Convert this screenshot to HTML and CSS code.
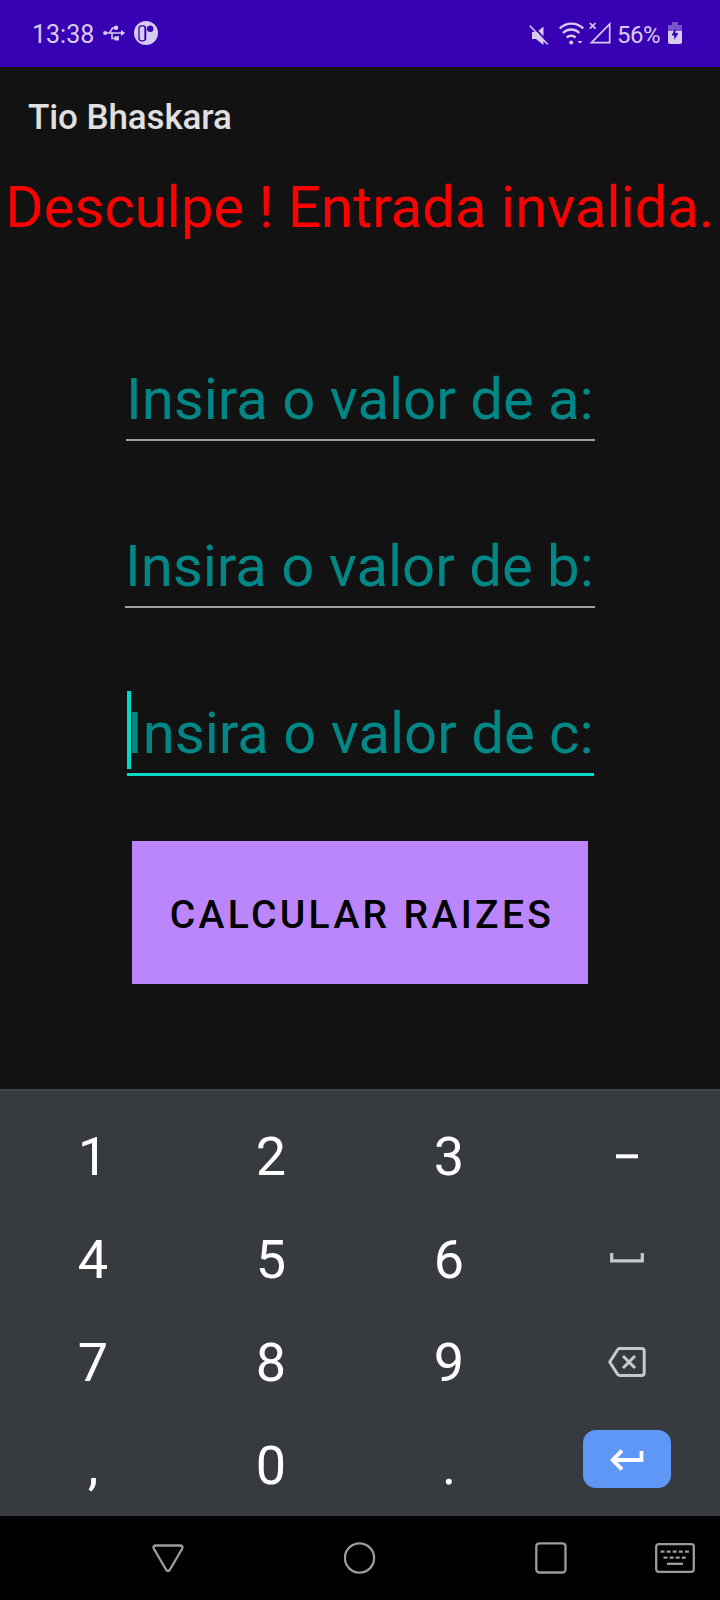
FILE: index.html
```html
<!DOCTYPE html>
<html lang="pt-BR">
<head>
<meta charset="utf-8">
<title>Tio Bhaskara</title>
<link rel="stylesheet" href="styles.css">
</head>
<body>
<div class="screen">
  <header class="status">
    <span class="clock">13:38</span>
    <svg class="usb" width="24" height="20" viewBox="0 0 24 20" fill="none" stroke="currentColor" stroke-width="1.600">
      <path d="M2 10H19M6.500 10L9.500 5H12M9 10V15.500H12"/>
      <circle cx="2.200" cy="10" r="2.100" fill="currentColor" stroke="none"/>
      <circle cx="13" cy="4.800" r="2.300" fill="currentColor" stroke="none"/>
      <path d="M11.500 13.200h4.500v4.300h-4.500zM18 7l4.200 3-4.200 3z" fill="currentColor" stroke="none"/>
    </svg>
    <svg class="app" width="24" height="24" viewBox="0 0 24 24">
      <circle cx="12" cy="12" r="12" fill="currentColor"/>
      <rect x="5" y="4.800" width="6.500" height="15" rx="2.500" fill="none" stroke="#3700b3" stroke-width="1.300"/>
      <path d="M11.300 6V18.500" stroke="#3700b3" stroke-width="1.800"/>
      <circle cx="16.200" cy="7.800" r="3.200" fill="#3700b3"/>
    </svg>
    <span class="spacer"></span>
    <svg class="mute" width="20" height="22" viewBox="0 0 20 22">
      <path d="M3 8v7h4l7.500 6V2.500L8 8z" fill="currentColor"/>
      <path d="M2.500 .8l18 19" stroke="#3700b3" stroke-width="1.800"/>
      <path d="M.8 1.800l18 18.700" stroke="currentColor" stroke-width="1.600"/>
    </svg>
    <svg class="wifi" width="25" height="23" viewBox="0 0 25 23" fill="none" stroke="currentColor" stroke-width="2.400">
      <path d="M.8 6.500a16.500 16.500 0 0 1 23.400 0M4 11a11.500 11.500 0 0 1 16.400 0M7.800 15.500a6.500 6.500 0 0 1 8.800 0"/>
      <circle cx="12.200" cy="20.500" r="2" fill="currentColor" stroke="none"/>
      <path d="M18.500 19h5L21 21.500z" fill="currentColor" stroke="none"/>
    </svg>
    <svg class="signal" width="22" height="22" viewBox="0 0 22 22" fill="none" stroke="currentColor" stroke-width="1.700">
      <path d="M2.500 20.700L20.700 2v18.700z"/>
      <path d="M.8 1l5.700 5.700M6.500 1L.8 6.700"/>
    </svg>
    <span class="percent">56%</span>
    <svg class="battery" width="14" height="22" viewBox="0 0 14 22">
      <path d="M4 0h6v3h4v6H0V3h4z" fill="currentColor" opacity=".4"/>
      <path d="M0 9h14v11q0 2-2 2H2q-2 0-2-2z" fill="currentColor"/>
      <path d="M7.500 6L3.500 13.500h2.800V18L10.500 11H7.500z" fill="#3700b3"/>
    </svg>
  </header>
  <div class="appbar">Tio Bhaskara</div>
  <main class="content">
    <div class="error">Desculpe ! Entrada invalida.</div>
    <div class="fields">
      <div class="field field-a">Insira o valor de a:</div>
      <div class="field field-b">Insira o valor de b:</div>
      <div class="field field-c">Insira o valor de c:<span class="caret"></span></div>
    </div>
    <div class="button">CALCULAR RAIZES</div>
  </main>
  <section class="keyboard">
    <span class="key">1</span><span class="key">2</span><span class="key">3</span>
    <span class="key"><svg width="22" height="5" viewBox="0 0 22 5"><path d="M0 .3h22v4H0z" fill="#fff"/></svg></span>
    <span class="key">4</span><span class="key">5</span><span class="key">6</span>
    <span class="key"><svg class="space" width="34" height="10" viewBox="0 0 34 10"><path d="M1.700 0v7.900h30.600V0" fill="none" stroke="#c8c9ca" stroke-width="3.200"/></svg></span>
    <span class="key">7</span><span class="key">8</span><span class="key">9</span>
    <span class="key"><svg class="delete" width="38" height="30" viewBox="0 0 38 30" fill="none" stroke="#c8c9ca" stroke-width="3" stroke-linejoin="round"><path d="M11.500 1.600H33.500q2.700 0 2.700 2.700V25.700q0 2.700-2.700 2.700H11.500Q10.300 28.400 9.600 27.300L1.700 15 9.600 2.700Q10.300 1.600 11.500 1.600z"/><path d="M15 9l12 12M27 9l-12 12"/></svg></span>
    <span class="key">,</span><span class="key">0</span><span class="key">.</span>
    <span class="key"><span class="enter"><svg width="34" height="22" viewBox="0 0 34 22" fill="none" stroke="#fff" stroke-width="3.800"><path d="M31.500 2v9H3M12 1.700L2.700 11 12 20.300"/></svg></span></span>
  </section>
  <nav class="nav">
    <svg class="back" width="32" height="28" viewBox="0 0 32 28"><path d="M4 1.500H28Q31.500 1.500 30 5L18 25.500Q16 28.500 14 25.500L2 5Q.5 1.500 4 1.500z"/></svg>
    <svg class="home" width="32" height="32" viewBox="0 0 32 32"><circle cx="15.500" cy="16" r="14.600"/></svg>
    <svg class="recent" width="32" height="32" viewBox="0 0 32 32"><rect x="1.300" y="1.300" width="29.200" height="29.200" rx="3"/></svg>
    <svg class="ime" width="40" height="30" viewBox="0 0 40 30"><rect x="1.200" y="1.200" width="37.600" height="27.600" rx="2.500"/><path d="M5.500 8.700h29" stroke-dasharray="4 2.100"/><path d="M8.500 14.700h23" stroke-dasharray="4 2.100"/><path d="M12 20.800h16"/></svg>
  </nav>
</div>
</body>
</html>
```
FILE: styles.css
```css
* { box-sizing: border-box; }
body { margin: 0; background: #121212; font-family: Roboto, sans-serif; }
svg { display: block; flex: none; }
.screen { width: 720px; height: 1600px; display: flex; flex-direction: column; overflow: hidden; }

.status { height: 67px; flex: none; background: #3700b3; color: #d7ccf0; display: flex; align-items: flex-start; padding: 0 38px 0 32px; }
.clock { font-size: 25px; line-height: 30px; margin-top: 20px; width: 71px; }
.usb { margin-top: 23px; }
.app { margin: 21px 0 0 7px; }
.spacer { flex: 1; }
.mute { margin-top: 24px; }
.wifi { margin: 22px 0 0 10px; }
.signal { margin: 22px 0 0 5px; }
.percent { font-size: 24px; line-height: 30px; letter-spacing: -0.5px; margin: 20px 0 0 6px; width: 43px; white-space: nowrap; }
.battery { margin: 22px 0 0 8px; }

.appbar { height: 100px; flex: none; padding-left: 28px; font-size: 35px; line-height: 102px; font-weight: 500; letter-spacing: -0.1px; color: #e0e0e0; }
.content { height: 922px; flex: none; display: flex; flex-direction: column; align-items: center; padding-top: 6px; }
.error { font-size: 58px; line-height: 68px; letter-spacing: 0.03px; color: #ff0000; white-space: nowrap; }
.fields { width: 470px; margin-top: 124px; display: flex; flex-direction: column; gap: 91px; }
.field { font-size: 58px; line-height: 68px; height: 76px; color: #018786; white-space: nowrap; border-bottom: 2px solid #a0a0a0; }
.field-a { margin-left: 1px; }
.field-c { height: 77px; margin: 0 1px 0 2px; border-bottom: 3px solid #03dac5; position: relative; }
.caret { position: absolute; left: 0; top: -8px; width: 4px; height: 78px; background: #03dac5; }
.button { width: 456px; height: 143px; margin-top: 65px; padding-left: 4px; background: #bb86fc; color: #000; font-size: 39px; font-weight: 500; letter-spacing: 3.35px; line-height: 149px; text-align: center; white-space: nowrap; }

.keyboard { height: 427px; flex: none; background: #373b40; border-top: 2px solid #404549; padding: 14px 4px 0; display: grid; grid-template-columns: repeat(4, 178px); grid-auto-rows: 103px; }
.key { display: flex; align-items: center; justify-content: center; color: #fff; font-size: 54px; line-height: 103px; }
.space { margin-top: -3px; }
.delete { margin-top: -2px; }
.enter { width: 88px; height: 58px; border-radius: 13px; background: #5e97f6; display: flex; align-items: center; justify-content: center; margin-bottom: 14px; padding-top: 3px; }

.nav { height: 84px; flex: none; background: #000; display: flex; align-items: center; padding-left: 152px; }
.nav svg { fill: none; stroke: #9c9c9c; stroke-width: 2.3; }
.home { margin-left: 160px; }
.recent { margin-left: 159px; }
.ime { margin-left: 88px; }
```
